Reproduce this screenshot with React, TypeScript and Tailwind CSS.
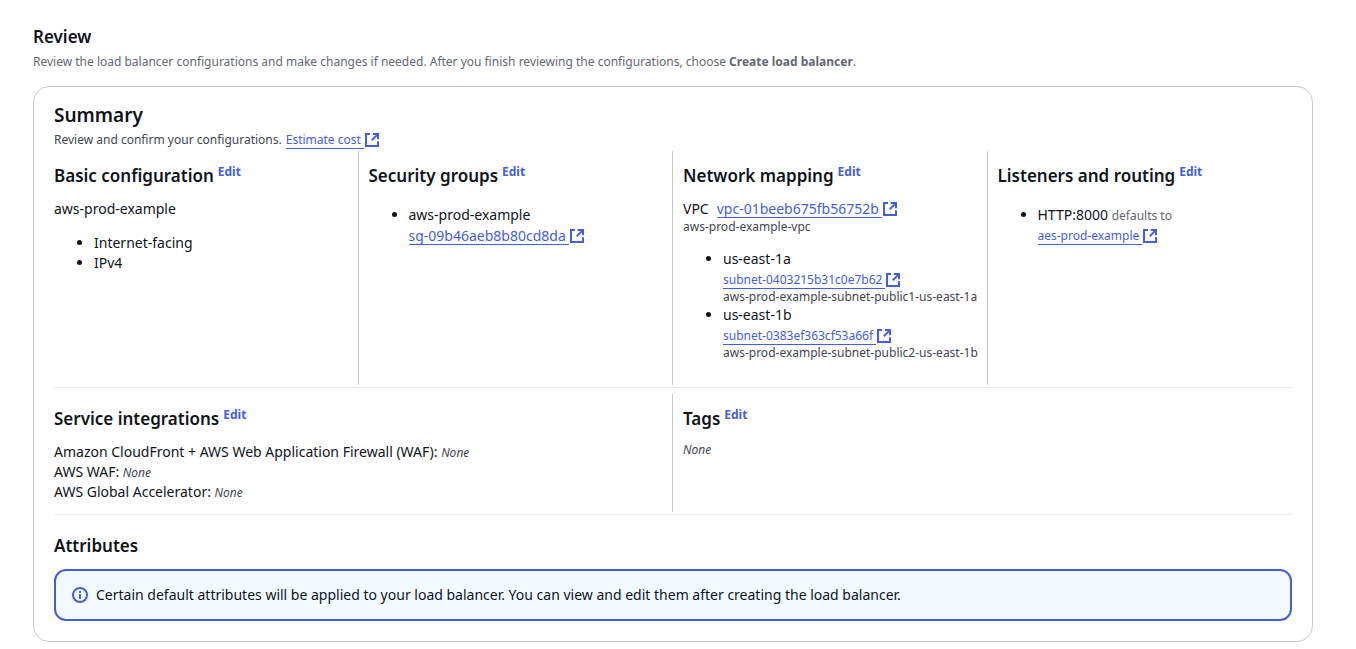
import React, { type ReactNode } from 'react';

function ExternalIcon() {
  return (
    <svg viewBox="0 0 16 16" className="h-4 w-4 shrink-0 fill-none stroke-[#435fdc] stroke-2" aria-hidden="true">
      <path d="M6 2H2v12h12V9.3" />
      <path d="M8.7 2H14v5.3M13.6 2.4 7.8 8.2" />
    </svg>
  );
}

function ExternalLink({ children, small = false }: { children: string; small?: boolean }) {
  return (
    <a href="#" className={`inline-flex items-center align-middle text-[#435fdc] ${small ? 'text-[12px]' : 'text-[14px]'}`}>
      <span className="border-b border-[#435fdc] pr-[3px] leading-4">{children}</span>
      <ExternalIcon />
    </a>
  );
}

function SectionTitle({ children, edit = true }: { children: string; edit?: boolean }) {
  return (
    <div className="flex items-start gap-1">
      <h3 className="text-[17px] leading-[22px] font-semibold">{children}</h3>
      {edit && (
        <a href="#" aria-label={`Edit ${children}`} className="text-[12px] leading-[14px] font-bold text-[#435fdc]">
          Edit
        </a>
      )}
    </div>
  );
}

function Column({ title, children }: { title: string; children: ReactNode }) {
  return (
    <section className="min-w-0 border-r border-[#c6c6cd] px-[10px] pt-[14px] last:border-r-0">
      <SectionTitle>{title}</SectionTitle>
      {children}
    </section>
  );
}

const bullets = 'list-disc pl-10';
const none = 'text-[12px] leading-4 text-[#424650] italic';

export default function App() {
  return (
    <main className="bg-white pt-[26px] pr-[43px] pb-2 pl-[33px] font-['Noto_Sans',sans-serif] text-[14px] leading-5 text-[#0f141a]">
      <h1 className="text-[17px] leading-[22px] font-semibold">Review</h1>
      <p className="mt-1 text-[12px] leading-5 text-[#656871]">
        Review the load balancer configurations and make changes if needed. After you finish reviewing the configurations, choose <b>Create load balancer</b>.
      </p>
      <div className="mt-[14px] rounded-2xl border border-[#c6c6cd] px-5 pt-4 pb-5">
        <h2 className="text-[19px] leading-6 font-semibold">Summary</h2>
        <p className="flex items-center gap-1 pt-[3px] pb-px text-[12px] leading-5 text-[#424650]">
          Review and confirm your configurations. <ExternalLink small>Estimate cost</ExternalLink>
        </p>
        <div className="-mx-[10px] grid min-h-[234px] grid-cols-4">
          <Column title="Basic configuration">
            <p className="mt-3">aws-prod-example</p>
            <ul className={`mt-[14px] ${bullets}`}>
              <li>Internet-facing</li>
              <li>IPv4</li>
            </ul>
          </Column>
          <Column title="Security groups">
            <ul className={`mt-[18px] ${bullets}`}>
              <li>
                aws-prod-example
                <div><ExternalLink>sg-09b46aeb8b80cd8da</ExternalLink></div>
              </li>
            </ul>
          </Column>
          <Column title="Network mapping">
            <div className="mt-3 flex gap-2">VPC <ExternalLink>vpc-01beeb675fb56752b</ExternalLink></div>
            <p className="text-[12px] leading-4 text-[#424650]">aws-prod-example-vpc</p>
            <ul className={`mt-[14px] ${bullets}`}>
              <li>
                us-east-1a
                <div><ExternalLink small>subnet-0403215b31c0e7b62</ExternalLink></div>
                <p className="text-[12px] leading-4 whitespace-nowrap text-[#424650]">aws-prod-example-subnet-public1-us-east-1a</p>
              </li>
              <li>
                us-east-1b
                <div><ExternalLink small>subnet-0383ef363cf53a66f</ExternalLink></div>
                <p className="text-[12px] leading-4 whitespace-nowrap text-[#424650]">aws-prod-example-subnet-public2-us-east-1b</p>
              </li>
            </ul>
          </Column>
          <Column title="Listeners and routing">
            <ul className={`mt-[18px] ${bullets}`}>
              <li>
                HTTP:8000 <small className="text-[12px] leading-4 text-[#656871]">defaults to</small>
                <div><ExternalLink small>aes-prod-example</ExternalLink></div>
              </li>
            </ul>
          </Column>
        </div>
        <hr className="mt-[2px] mb-[6px] border-[#ebebf0]" />
        <div className="-mx-[10px] grid min-h-[118px] grid-cols-2">
          <Column title="Service integrations">
            <div className="mt-3">
              <p>Amazon CloudFront + AWS Web Application Firewall (WAF): <em className={none}>None</em></p>
              <p>AWS WAF: <em className={none}>None</em></p>
              <p>AWS Global Accelerator: <em className={none}>None</em></p>
            </div>
          </Column>
          <Column title="Tags">
            <p className={`mt-3 ${none}`}>None</p>
          </Column>
        </div>
        <hr className="mt-[2px] mb-5 border-[#ebebf0]" />
        <SectionTitle edit={false}>Attributes</SectionTitle>
        <div role="status" className="mt-3 flex items-center gap-2 rounded-xl border-2 border-[#435fdc] bg-[#f2faff] px-4 py-[14px]">
          <svg viewBox="0 0 16 16" className="h-4 w-4 shrink-0 fill-none stroke-[#435fdc]" aria-hidden="true">
            <circle cx="8" cy="8" r="7" strokeWidth="2" />
            <path d="M8 4v2M8 7v5" strokeWidth="2" />
          </svg>
          <p>Certain default attributes will be applied to your load balancer. You can view and edit them after creating the load balancer.</p>
        </div>
      </div>
    </main>
  );
}
